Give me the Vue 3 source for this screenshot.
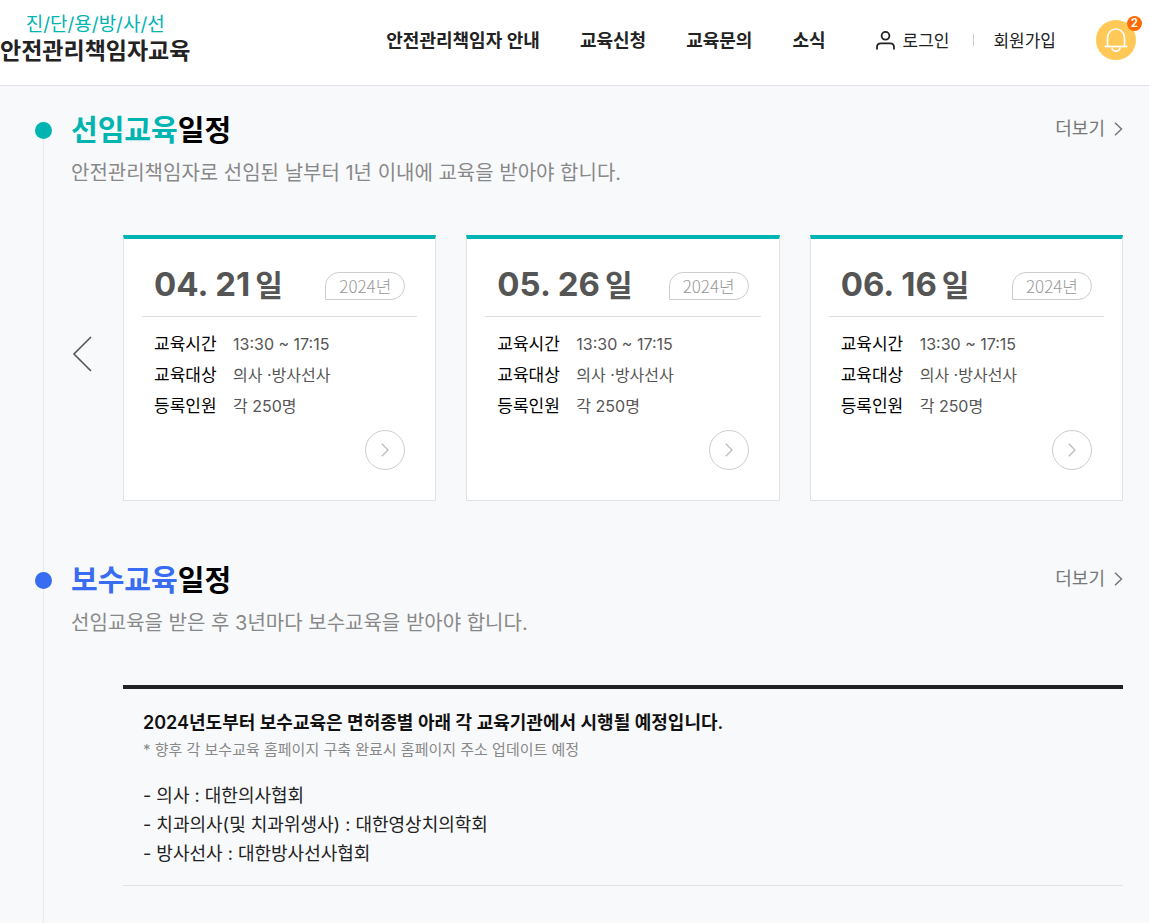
<script setup>
import { ref } from "vue";

const menu = ["안전관리책임자 안내", "교육신청", "교육문의", "소식"];

const alarmCount = ref(2);

const schedules = [
  { date: "04. 21", day: "일", year: 2024, time: "13:30 ~ 17:15", target: "의사 ·방사선사", seats: "각 250명" },
  { date: "05. 26", day: "일", year: 2024, time: "13:30 ~ 17:15", target: "의사 ·방사선사", seats: "각 250명" },
  { date: "06. 16", day: "일", year: 2024, time: "13:30 ~ 17:15", target: "의사 ·방사선사", seats: "각 250명" }
];

const agencies = [
  "의사 : 대한의사협회",
  "치과의사(및 치과위생사) : 대한영상치의학회",
  "방사선사 : 대한방사선사협회"
];
</script>

<template>
  <div class="page">
    <header class="header">
      <a href="#" class="logo">
        <span class="logo-top">진/단/용/방/사/선</span>
        <span class="logo-main">안전관리책임자교육</span>
      </a>

      <nav class="gnb">
        <a v-for="m in menu" :key="m" href="#">{{ m }}</a>
      </nav>

      <div class="util">
        <a href="#" class="login">
          <svg width="20" height="20" viewBox="0 0 20 20" fill="none" stroke="#222" stroke-width="1.8" aria-hidden="true">
            <circle cx="9.5" cy="4.8" r="3.900" />
            <path d="M1 18.500v-2.400Q1 12.300 4.800 12.300h9.400Q18 12.300 18 16.100v2.400" />
          </svg>
          로그인
        </a>
        <span class="bar"></span>
        <a href="#" class="join">회원가입</a>
        <button type="button" class="alarm" aria-label="알림">
          <svg width="26" height="26" viewBox="0 0 26 26" fill="none" stroke="#fff" stroke-width="1.7" aria-hidden="true">
            <path d="M4.5 19.500V10.500a8.500 8.500 0 0 1 17 0v9" />
            <path d="M1.500 19.500h23" />
            <path d="M9 20.500a4 3.600 0 0 0 8 0" />
          </svg>
          <span class="badge">{{ alarmCount }}</span>
        </button>
      </div>
    </header>

    <main class="main">
      <!-- 선임교육 -->
      <section class="section first">
        <div class="rail"><i class="dot"></i></div>
        <div class="content">
          <div class="section-head">
            <h2><em>선임교육</em>일정</h2>
            <a href="#" class="more">
              더보기
              <svg width="9" height="14" viewBox="0 0 9 14" fill="none" stroke="#777" stroke-width="1.5" aria-hidden="true">
                <path d="M1 0.700 7.500 7 1 13.300" />
              </svg>
            </a>
          </div>
          <p class="desc">안전관리책임자로 선임된 날부터 1년 이내에 교육을 받아야 합니다.</p>

          <div class="slider">
            <button type="button" class="prev" aria-label="이전">
              <svg width="20" height="36" viewBox="0 0 20 36" fill="none" stroke="#555" stroke-width="1.6" aria-hidden="true">
                <path d="M19 1 2 18l17 17" />
              </svg>
            </button>
            <ul class="cards">
              <li v-for="s in schedules" :key="s.date" class="card">
                <div class="card-head">
                  <strong class="date">{{ s.date }}<span>{{ s.day }}</span></strong>
                  <span class="year">{{ s.year }}년</span>
                </div>
                <dl class="info">
                  <div><dt>교육시간</dt><dd>{{ s.time }}</dd></div>
                  <div><dt>교육대상</dt><dd>{{ s.target }}</dd></div>
                  <div><dt>등록인원</dt><dd>{{ s.seats }}</dd></div>
                </dl>
                <a href="#" class="go" :aria-label="`${s.date} 상세보기`">
                  <svg width="8" height="14" viewBox="0 0 8 14" fill="none" stroke="#bbb" stroke-width="1.3" aria-hidden="true">
                    <path d="M0.800 0.800 7 7 0.800 13.200" />
                  </svg>
                </a>
              </li>
            </ul>
          </div>
        </div>
      </section>

      <!-- 보수교육 -->
      <section class="section second">
        <div class="rail"><i class="dot"></i></div>
        <div class="content">
          <div class="section-head">
            <h2><em>보수교육</em>일정</h2>
            <a href="#" class="more">
              더보기
              <svg width="9" height="14" viewBox="0 0 9 14" fill="none" stroke="#777" stroke-width="1.5" aria-hidden="true">
                <path d="M1 0.700 7.500 7 1 13.300" />
              </svg>
            </a>
          </div>
          <p class="desc">선임교육을 받은 후 3년마다 보수교육을 받아야 합니다.</p>

          <div class="notice">
            <strong>2024년도부터 보수교육은 면허종별 아래 각 교육기관에서 시행될 예정입니다.</strong>
            <p>* 향후 각 보수교육 홈페이지 구축 완료시 홈페이지 주소 업데이트 예정</p>
            <ul>
              <li v-for="a in agencies" :key="a">- {{ a }}</li>
            </ul>
          </div>
        </div>
      </section>
    </main>
  </div>
</template>

<style>
body {
  margin: 0;
  background: #f8f9fb;
}
</style>

<style scoped>
.page {
  display: flex;
  flex-direction: column;
  min-height: 100vh;
  font-family: Inter, "Noto Sans CJK KR", sans-serif;
  color: #222;
}
a { color: inherit; text-decoration: none; }
ul, dl, dd, p, h2 { margin: 0; padding: 0; }
ul { list-style: none; }
button { padding: 0; border: 0; background: none; cursor: pointer; }
svg { display: block; }

/* header */
.header {
  display: flex;
  align-items: center;
  height: 80px;
  padding: 0 13px 5px 0;
  background: #fff;
  border-bottom: 1px solid #e1e3e6;
  line-height: 24px;
  white-space: nowrap;
}
.logo {
  display: flex;
  flex-direction: column;
  align-items: center;
  padding-bottom: 4px;
  line-height: 27px;
}
.logo-top { font-size: 19px; color: #00b4b1; }
.logo-main { font-size: 23px; font-weight: 700; }
.gnb {
  display: flex;
  gap: 40px;
  margin-left: auto;
  padding-top: 2px;
  font-size: 18px;
  font-weight: 600;
}
.util {
  display: flex;
  align-items: center;
  margin-left: 50px;
  font-size: 17px;
}
.login, .join { padding-top: 2px; }
.login { display: flex; align-items: center; gap: 7px; }
.bar {
  width: 1px;
  height: 12px;
  margin: 0 19px 0 24px;
  background: #ccc;
}
.alarm {
  position: relative;
  display: flex;
  align-items: center;
  justify-content: center;
  width: 40px;
  height: 40px;
  margin-left: 40px;
  border-radius: 50%;
  background: #ffc857;
}
.badge {
  position: absolute;
  top: -4px;
  right: -6px;
  width: 15px;
  height: 15px;
  border-radius: 50%;
  background: #ff6a00;
  color: #fff;
  font: 600 12px/15px Roboto, sans-serif;
  text-align: center;
}

/* sections */
.main {
  flex: 1;
  display: flex;
  flex-direction: column;
  padding-top: 22px;
}
.section { display: flex; padding: 0 26px 0 35px; }
.second { flex: 1; }
.rail {
  flex: none;
  width: 17px;
  padding-top: 14px;
  background: linear-gradient(#e9ebee, #e9ebee) center / 1px 100% no-repeat;
}
.first .rail { margin-top: 14px; padding-top: 0; }
.dot {
  display: block;
  height: 17px;
  border-radius: 50%;
  background: #00b4b1;
}
.second .dot { background: #386cf2; }
.content {
  flex: 1;
  min-width: 0;
  margin-left: 19px;
  padding-bottom: 37px;
}
.first .content { padding-bottom: 57px; }
.section-head {
  display: flex;
  align-items: center;
  justify-content: space-between;
}
h2 {
  font-size: 29px;
  font-weight: 700;
  line-height: 46px;
  color: #000;
}
h2 em { font-style: normal; color: #00b4b1; }
.second h2 em { color: #386cf2; }
.more {
  display: flex;
  align-items: center;
  gap: 9px;
  padding-bottom: 4px;
  font-size: 18px;
  line-height: 26px;
  color: #777;
}
.desc {
  margin-top: 4px;
  font-size: 20px;
  line-height: 30px;
  color: #888;
}

/* schedule cards */
.slider {
  display: flex;
  align-items: center;
  margin-top: 47px;
}
.prev { flex: none; margin: 0 31px 29px 1px; }
.cards {
  flex: 1;
  display: grid;
  grid-template-columns: repeat(3, 1fr);
  gap: 30px;
}
.card {
  display: flex;
  flex-direction: column;
  padding: 0 18px 30px;
  background: #fff;
  border: 1px solid #e1e3e6;
  border-top: 4px solid #00b4b1;
}
.card-head {
  display: flex;
  align-items: flex-end;
  justify-content: space-between;
  height: 61px;
  padding: 0 12px 16px;
  border-bottom: 1px solid #ddd;
}
.date {
  display: flex;
  align-items: baseline;
  gap: 5px;
  font-size: 33px;
  font-weight: 700;
  line-height: 30px;
  color: #555;
  white-space: nowrap;
}
.date span { font-size: 30px; }
.year {
  width: 78px;
  border: 1px solid #ccc;
  border-radius: 14px 14px 14px 0;
  font-family: "Noto Sans CJK KR", sans-serif;
  font-size: 17px;
  font-weight: 300;
  line-height: 26px;
  text-align: center;
  color: #999;
}
.info { padding: 12px 12px 0; line-height: 31px; }
.info div { display: flex; }
.info dt { width: 79px; font-size: 17px; color: #000; }
.info dd { font-size: 16px; color: #555; }
.go {
  display: flex;
  align-items: center;
  justify-content: center;
  align-self: flex-end;
  width: 38px;
  height: 38px;
  margin: 8px 12px 0 0;
  border: 1px solid #ccc;
  border-radius: 50%;
}

/* notice */
.notice {
  margin: 47px 0 0 52px;
  padding: 20px 20px 17px;
  border-top: 4px solid #222;
  border-bottom: 1px solid #e1e3e6;
}
.notice strong {
  display: block;
  font-size: 18px;
  font-weight: 600;
  line-height: 28px;
  color: #111;
}
.notice p {
  font-size: 15px;
  line-height: 26px;
  color: #888;
}
.notice ul {
  margin-top: 18px;
  font-size: 18px;
  line-height: 29px;
  color: #222;
}
</style>
